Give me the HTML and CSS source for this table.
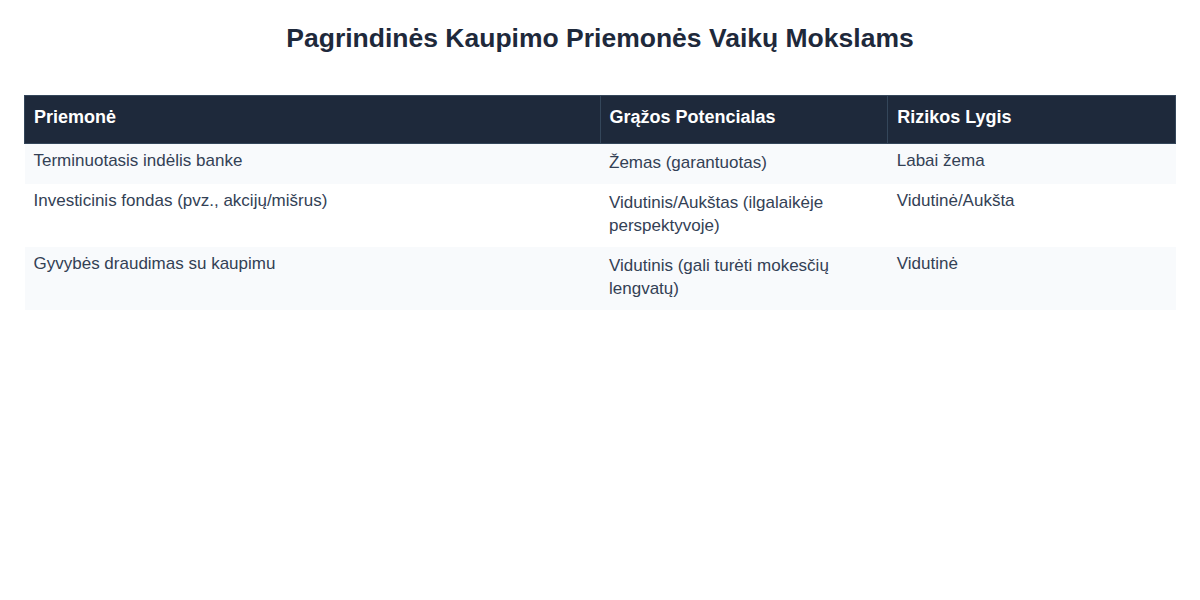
FILE: index.html
```html
<!DOCTYPE html>
<html lang="lt">
<head>
<meta charset="utf-8">
<title>Pagrindinės Kaupimo Priemonės Vaikų Mokslams</title>
<link rel="stylesheet" href="styles.css">
</head>
<body>
<main class="page">
  <h1 class="title">Pagrindinės Kaupimo Priemonės Vaikų Mokslams</h1>
  <table class="grid">
    <colgroup>
      <col class="c1"><col class="c2"><col class="c3">
    </colgroup>
    <thead>
      <tr><th>Priemonė</th><th>Grąžos Potencialas</th><th>Rizikos Lygis</th></tr>
    </thead>
    <tbody>
      <tr><td>Terminuotasis indėlis banke</td><td class="mid">Žemas (garantuotas)</td><td>Labai žema</td></tr>
      <tr><td>Investicinis fondas (pvz., akcijų/mišrus)</td><td class="mid">Vidutinis/Aukštas (ilgalaikėje perspektyvoje)</td><td>Vidutinė/Aukšta</td></tr>
      <tr><td>Gyvybės draudimas su kaupimu</td><td class="mid">Vidutinis (gali turėti mokesčių lengvatų)</td><td>Vidutinė</td></tr>
    </tbody>
  </table>
</main>
</body>
</html>
```

FILE: styles.css
```css
html, body {
  margin: 0;
  background: #ffffff;
}
.page {
  padding: 21px 24px 24px;
  font-family: "Liberation Sans", Arial, sans-serif;
  color: #1e293b;
}
.title {
  margin: 0 0 40px;
  text-align: center;
  font-size: 26.5px;
  line-height: 34px;
  font-weight: 700;
  color: #1e293b;
}
.grid {
  width: 100%;
  border-collapse: collapse;
  table-layout: fixed;
}
.c1 { width: 50%; }
.c2 { width: 25%; }
.c3 { width: 25%; }
.grid th {
  background: #1e293b;
  color: #ffffff;
  text-align: left;
  font-size: 18px;
  font-weight: 700;
  line-height: 23px;
  padding: 10px 9px 14px;
  border: 1px solid #34465a;
}
.grid td {
  text-align: left;
  vertical-align: top;
  font-size: 17px;
  line-height: 20px;
  padding: 7px 9px 10px;
  color: #334155;
}
.grid td.mid {
  line-height: 23px;
}
.grid tbody tr:nth-child(odd) {
  background: #f8fafc;
}
```
